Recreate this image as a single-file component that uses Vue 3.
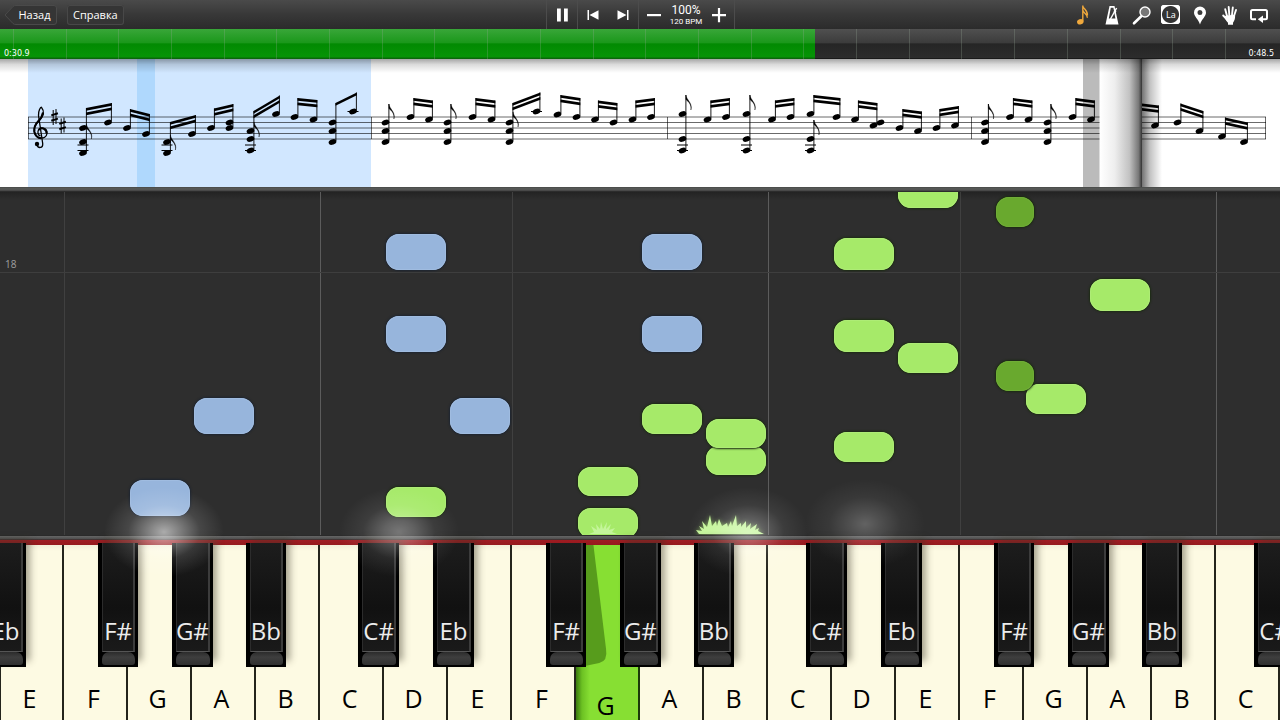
<script setup>
import { computed, ref } from "vue";

const playing = ref(true);
const tempo = ref(100);
const bpm = computed(() => Math.round(tempo.value * 1.2));

// beamed pairs: [head x, head ys, stem top] for both ends, then the beam count
const pairs = [
  { a: [83, [128, 142, 153], 108], b: [108, [122.5], 103], beams: 2 },
  { a: [127, [128], 109], b: [146, [134], 114], beams: 2 },
  { a: [167, [142, 153], 122], b: [192, [134], 115], beams: 2 },
  { a: [211, [128], 108.5], b: [229.5, [122.5, 128], 104], beams: 2 },
  { a: [250.5, [131, 139, 150.5], 111], b: [276, [114], 95.5], beams: 2 },
  { a: [294.5, [117], 98], b: [313.5, [119.5], 100], beams: 2 },
  { a: [332.5, [122.5, 131, 142], 103], b: [353, [111.5], 92.5], beams: 1 },
  { a: [410.5, [117], 98], b: [429, [119.5], 100.5], beams: 2 },
  { a: [472.5, [117], 98], b: [491.5, [119.5], 100.5], beams: 2 },
  { a: [509.5, [122.5, 131, 142], 103], b: [536.5, [111.5], 92.5], beams: 2 },
  { a: [557.5, [114.5], 95], b: [576.5, [117], 98], beams: 2 },
  { a: [595, [119.5], 100.5], b: [613.5, [122.5], 103], beams: 2 },
  { a: [632.5, [119.5], 100.5], b: [651, [117], 98], beams: 2 },
  { a: [707.5, [119.5], 100.5], b: [726, [117], 98], beams: 2 },
  { a: [772, [119.5], 100.5], b: [790.5, [117], 98], beams: 2 },
  { a: [810.5, [114], 95], b: [836.5, [117], 98], beams: 2 },
  { a: [855, [119.5], 100.5], b: [873.5, [125.5], 103], beams: 2 },
  { a: [899.5, [128], 109], b: [918, [131], 111.5], beams: 2 },
  { a: [936.5, [128], 109], b: [955, [125.5], 106], beams: 2 },
  { a: [1010, [117], 98], b: [1028.5, [119.5], 100.5], beams: 2 },
  { a: [1072.5, [117], 98], b: [1091, [119.5], 100.5], beams: 2 },
  { a: [1177.5, [122.5], 103.5], b: [1199.5, [131], 111], beams: 2 },
  { a: [1222, [136.5], 117.5], b: [1244, [142], 122.5], beams: 2 }
];

const singles = [
  [385.5, [122.5, 131, 142], 104],
  [447.5, [122.5, 131, 142], 104],
  [682.5, [114, 139, 150.5], 95],
  [746.5, [114, 139, 150.5], 95],
  [810.5, [139, 150.5], 120],
  [985, [122.5, 131, 142], 104],
  [1047.5, [122.5, 131, 142], 104]
];

const chords = [
  ...pairs.flatMap((p) => [p.a, p.b]),
  ...singles,
  [1155, [125.5], 105.5]
];

const heads = [
  ...chords.flatMap(([x, ys]) => ys.map((y) => [x, y])),
  [880.5, 122.5]
];

const stems = chords.map(([x, ys, top]) => [x + 3.4, top, Math.max(...ys) - 1]);

const beams = pairs.flatMap(({ a, b, beams: n }) => {
  const x1 = a[0] + 3;
  const x2 = b[0] + 3.8;
  return [0, 4.4].slice(0, n).map((dy) => beamPoints(x1, a[2] + dy, x2, b[2] + dy));
});
beams.push(beamPoints(1142, 103.5, 1158.8, 105.5), beamPoints(1142, 108, 1158.8, 110));

const flags = [
  ...singles.map(([x, , top]) => [x + 3.4, top]),
  [86.4, 124],
  [170.4, 135],
  [254, 122],
  [513, 112]
];

const ledgers = chords.flatMap(([x, ys]) => {
  const low = Math.max(...ys);
  const lines = [];
  if (low > 148) lines.push([x, 145], [x, 150.5]);
  if (ys[0] < 112) lines.push([x, 111.5]);
  return lines;
});

function beamPoints(x1, y1, x2, y2) {
  return `${x1},${y1} ${x2},${y2} ${x2},${y2 + 2.8} ${x1},${y1 + 2.8}`;
}

const staffLines = [117, 122.5, 128, 133.5, 139];
const barLines = [28.5, 371.5, 667.5, 971.5, 1265.5];

// falling notes: white key index, distance above the keyboard, length
const notes = [
  { key: 6, y: 265, h: 36, hand: "left" },
  { key: 10, y: 265, h: 36, hand: "left" },
  { key: 6, y: 183, h: 36, hand: "left" },
  { key: 10, y: 183, h: 36, hand: "left" },
  { key: 3, y: 101, h: 36, hand: "left" },
  { key: 7, y: 101, h: 36, hand: "left" },
  { key: 2, y: 19, h: 36, hand: "left" },
  { key: 14, y: 327, h: 30, hand: "right" },
  { key: 13, y: 265, h: 32, hand: "right" },
  { key: 17, y: 224, h: 32, hand: "right" },
  { key: 13, y: 183, h: 32, hand: "right" },
  { key: 14, y: 162, h: 30, hand: "right" },
  { key: 16, y: 121, h: 30, hand: "right" },
  { key: 13, y: 73, h: 30, hand: "right" },
  { key: 10, y: 101, h: 30, hand: "right" },
  { key: 11, y: 60, h: 29, hand: "right" },
  { key: 11, y: 87, h: 29, hand: "right" },
  { key: 9, y: 39, h: 29, hand: "right" },
  { key: 9, y: -3, h: 30, hand: "right" },
  { key: 6, y: 18, h: 30, hand: "right" },
  { key: 15.53, y: 308, h: 30, hand: "sharp" },
  { key: 15.53, y: 144, h: 30, hand: "sharp" }
];

const lanes = [
  { at: 1, strong: false },
  { at: 5, strong: true },
  { at: 8, strong: false },
  { at: 12, strong: true },
  { at: 15, strong: false },
  { at: 19, strong: true }
];

const glows = [
  { at: 12.8, size: "big" },
  { at: 31.2, size: "mid" },
  { at: 58.4, size: "mid" },
  { at: 67.6, size: "low" }
];

const names = ["C", "D", "E", "F", "G", "A", "B"];
const whiteKeys = Array.from({ length: 20 }, (_, i) => ({
  name: names[(i + 2) % 7],
  down: i === 9
}));

// left edge of every black key, in white key widths
const octave = [
  { name: "Eb", at: -0.23 },
  { name: "F#", at: 1.53 },
  { name: "G#", at: 2.69 },
  { name: "Bb", at: 3.84 },
  { name: "C#", at: 5.6 }
];
const blackKeys = [0, 7, 14].flatMap((shift) =>
  octave.map((k) => ({ name: k.name, at: k.at + shift }))
);
</script>

<template>
  <div class="player">
    <header class="toolbar">
      <nav class="menu">
        <button class="back" type="button">
          <svg class="back-shape" viewBox="0 0 53 20" preserveAspectRatio="none" aria-hidden="true">
            <path d="M1 10 L9 1.5 Q10 .5 12 .5 H50 Q52.5 .5 52.5 3 V17 Q52.5 19.5 50 19.5 H12 Q10 19.5 9 18.5 Z" />
          </svg>
          <span>Назад</span>
        </button>
        <button class="help" type="button">Справка</button>
      </nav>

      <div class="transport">
        <div class="group">
          <button class="icon" type="button" aria-label="Пауза" @click="playing = !playing">
            <svg width="16" height="16" viewBox="0 0 16 16"><path d="M3 1.500h3.800v13H3zM10 1.500h3.800v13H10z" /></svg>
          </button>
        </div>
        <div class="group">
          <button class="icon" type="button" aria-label="В начало">
            <svg width="16" height="16" viewBox="0 0 16 16"><path d="M2.500 3h1.500v10H2.500zM13.500 3.200v9.600L4.500 8z" /></svg>
          </button>
          <button class="icon" type="button" aria-label="Вперёд">
            <svg width="16" height="16" viewBox="0 0 16 16"><path d="M12 3h1.500v10H12zM2.500 3.200v9.600L11.500 8z" /></svg>
          </button>
        </div>
        <div class="group last">
          <button class="icon" type="button" aria-label="Медленнее" @click="tempo -= 5">
            <svg width="16" height="16" viewBox="0 0 16 16"><path d="M1 7h14v2.200H1z" /></svg>
          </button>
          <div class="tempo">
            <span class="percent">{{ tempo }}%</span>
            <span class="bpm">{{ bpm }} BPM</span>
          </div>
          <button class="icon" type="button" aria-label="Быстрее" @click="tempo += 5">
            <svg width="16" height="16" viewBox="0 0 16 16"><path d="M1 7h5.900V1h2.200v6H15v2.200H9.100v6H6.900v-6H1z" /></svg>
          </button>
        </div>
      </div>

      <div class="tools">
        <button type="button" aria-label="Ноты">
          <svg width="20" height="22" viewBox="0 0 20 22">
            <ellipse cx="7.300" cy="17.800" rx="3.300" ry="2.600" transform="rotate(-20 7.300 17.800)" fill="#efa83c" />
            <path d="M9.800 17.500V1.500M9.800 2c.5 3 5.200 4 4.600 9.500M9.800 6.200c.5 3 4.600 3.500 4.600 7.500" fill="none" stroke="#efa83c" stroke-width="1.400" />
          </svg>
        </button>
        <button type="button" aria-label="Метроном">
          <svg width="20" height="22" viewBox="0 0 20 22">
            <path fill-rule="evenodd" d="M7.500 2h5L16.500 20.500h-13zM8.800 3.800 6.800 14.500h6.600L11.400 3.800z" fill="#fff" />
            <path d="M8.500 15 14.600 4" stroke="#fff" stroke-width="1.500" />
            <circle cx="13" cy="7.500" r="1.200" fill="#fff" />
          </svg>
        </button>
        <button type="button" aria-label="Масштаб">
          <svg width="20" height="22" viewBox="0 0 20 22">
            <path d="M9 12.500 2 19.300" stroke="#fff" stroke-width="2.600" stroke-linecap="round" />
            <circle cx="13" cy="8" r="5" fill="#777" stroke="#fff" stroke-width="1.400" />
          </svg>
        </button>
        <button class="la" type="button" aria-label="Названия нот"><span>La</span></button>
        <button type="button" aria-label="Метка">
          <svg width="20" height="22" viewBox="0 0 20 22">
            <path fill-rule="evenodd" d="M10 2.500a6 6 0 0 1 6 6c0 4-4.200 6.500-6 12-1.800-5.500-6-8-6-12a6 6 0 0 1 6-6zm0 3.600a2.500 2.500 0 1 0 0 5 2.500 2.500 0 0 0 0-5z" fill="#fff" />
          </svg>
        </button>
        <button type="button" aria-label="Руки">
          <svg width="20" height="22" viewBox="0 0 20 22">
            <path d="M7 12 5.200 5.200M9.300 11 8.700 3M12 11l.8-7.500M14 12l2-6M7 15.500 3.200 11.500" stroke="#fff" stroke-width="1.900" stroke-linecap="round" />
            <path d="M6 11.500 15 10.800c.5 3-.5 6-2 8v2H8v-2c-1.500-1.500-3-4-3.600-6z" fill="#fff" />
          </svg>
        </button>
        <button type="button" aria-label="Повтор">
          <svg width="20" height="22" viewBox="0 0 20 22">
            <path d="M7 15.300H3.500Q2 15.300 2 13.800V7.500Q2 6 3.500 6h13Q18 6 18 7.500v6.300q0 1.500-1.500 1.500H13" fill="none" stroke="#fff" stroke-width="2" />
            <path d="M14 11.500v7.600L8.800 15.300z" fill="#fff" />
          </svg>
        </button>
      </div>
    </header>

    <section class="timeline">
      <div class="elapsed"></div>
      <div class="ticks"><i v-for="n in 24" :key="n"></i></div>
      <div class="times">
        <span>0:30.9</span>
        <span>0:48.5</span>
      </div>
    </section>

    <svg class="sheet" viewBox="0 59 1280 128" aria-label="Нотный стан">
      <defs>
        <linearGradient id="fold">
          <stop offset="0" stop-color="#fff" />
          <stop offset=".35" stop-color="#eee" />
          <stop offset=".7" stop-color="#c2c2c2" />
          <stop offset=".92" stop-color="#777" />
          <stop offset="1" stop-color="#333" />
        </linearGradient>
        <linearGradient id="cast">
          <stop offset="0" stop-color="#000" stop-opacity=".55" />
          <stop offset=".4" stop-color="#000" stop-opacity=".24" />
          <stop offset="1" stop-color="#000" stop-opacity="0" />
        </linearGradient>
        <linearGradient id="top" x2="0" y2="1">
          <stop offset="0" stop-color="#000" stop-opacity=".35" />
          <stop offset=".4" stop-color="#000" stop-opacity=".14" />
          <stop offset="1" stop-color="#000" stop-opacity="0" />
        </linearGradient>
      </defs>
      <rect y="59" width="1280" height="128" fill="#fff" />
      <rect x="28" y="59" width="343" height="128" fill="#d1e7ff" />
      <rect x="137" y="59" width="18" height="128" fill="#afd8fd" />
      <rect x="1083" y="59" width="16.500" height="128" fill="#bbb" />

      <g stroke="#000" stroke-opacity=".65" stroke-width=".9">
        <path v-for="y in staffLines" :key="y" :d="`M28 ${y}H1099.500M1142 ${y}H1266`" />
        <path v-for="x in barLines" :key="x" :d="`M${x} 117V139`" />
      </g>

      <g fill="none" stroke="#000">
        <path d="M37 145C38 148.500 43.200 148.500 42.700 143.500L38.500 115.500C38.200 110.500 40.500 107 41.500 107.300C44.500 111 43.500 116 39.300 120.500C35.500 124 33.800 127 34 131C35 139.500 46 140.500 47 133.500C47.300 127 39 126.300 38 131.500C37.700 134 39 135.500 40.500 136" stroke-width="1.300" />
        <path d="M43 112.500C42.500 116 40.500 119 38 121.500C35 124.500 33.900 128 34.500 132C35.500 136 38 138 41 138.200" stroke-width="2" />
        <path d="M46.500 133.500C47 129 41.500 126.500 39 130" stroke-width="2" />
        <g v-for="[x, y] in [[54.5, 117], [62.5, 125.5]]" :key="x">
          <path :d="`M${x - 1.300} ${y - 7}v15M${x + 1.500} ${y - 8}v15`" stroke-width="1" />
          <path :d="`M${x - 3.200} ${y - 1.600}l6.600 -2.200M${x - 3.200} ${y + 3.800}l6.600 -2.200`" stroke-width="2" />
        </g>
      </g>
      <circle cx="37" cy="144" r="2.200" />

      <path v-for="([x, y1, y2], i) in stems" :key="'s' + i" :d="`M${x} ${y1}V${y2}`" stroke="#000" stroke-width=".9" />
      <ellipse
        v-for="([x, y], i) in heads"
        :key="'h' + i"
        :cx="x"
        :cy="y"
        rx="4"
        ry="2.600"
        :transform="`rotate(-20 ${x} ${y})`"
      />
      <polygon v-for="(points, i) in beams" :key="'b' + i" :points="points" />
      <path
        v-for="([x, y], i) in flags"
        :key="'f' + i"
        :d="`M${x} ${y}c.5 5 7 8 5 15c.8 -5 -2 -8 -5 -10.500z`"
        stroke="#000"
        stroke-width=".4"
      />
      <path v-for="([x, y], i) in ledgers" :key="'l' + i" :d="`M${x - 5.500} ${y}h11`" stroke="#000" />

      <rect x="1100" y="59" width="42" height="128" fill="url(#fold)" />
      <rect x="1142" y="59" width="20" height="128" fill="url(#cast)" />
      <rect y="59" width="1280" height="14" fill="url(#top)" />
    </svg>

    <div class="divider"></div>

    <main class="roll">
      <i
        v-for="lane in lanes"
        :key="lane.at"
        class="lane"
        :class="{ strong: lane.strong }"
        :style="{ left: lane.at * 5 + '%' }"
      ></i>
      <div class="measure"><span>18</span></div>
      <div
        v-for="(note, i) in notes"
        :key="i"
        class="note"
        :class="note.hand"
        :style="{ left: note.key * 5 + '%', bottom: note.y + 'px', height: note.h + 'px' }"
      ></div>
      <svg class="burst small" viewBox="0 0 28 12" preserveAspectRatio="none">
        <path d="M0 12 5 10 2 4 8 8 7 2 11 7 12 0 14 7 18 0 17 7 22 2 20 8 26 6 23 10 28 12z" />
      </svg>
      <svg class="burst wide" viewBox="0 0 68 19" preserveAspectRatio="none">
        <path d="M3 19 0 15 6 16 3 11 8 14 6 6 11 12 14 0 16 11 20 6 21 11 23 4 26 11 31 8 32 12 35 6 36 11 40 0 41 11 45 8 45 12 50 6 50 13 55 8 54 14 61 9 59 15 63 13 62 16 68 19z" />
      </svg>
    </main>

    <section class="keyboard">
      <div class="felt"></div>
      <div class="keys">
        <button v-for="(key, i) in whiteKeys" :key="i" type="button" class="white" :class="{ down: key.down }">
          <svg v-if="key.down" class="slant" viewBox="0 0 64 124" preserveAspectRatio="none" aria-hidden="true">
            <path d="M9 0H18L31 104Q33 116 24 118L9 121z" />
          </svg>
          <span>{{ key.name }}</span>
        </button>
        <button
          v-for="key in blackKeys"
          :key="key.at"
          type="button"
          class="black"
          :class="{ flat: key.at > 8 && key.at < 9 }"
          :style="{ left: key.at * 5 + '%' }"
        >
          <span class="face">{{ key.name }}</span>
          <span class="lip"></span>
        </button>
      </div>
      <i
        v-for="glow in glows"
        :key="glow.at"
        class="glow"
        :class="glow.size"
        :style="{ left: glow.at + '%' }"
      ></i>
    </section>
  </div>
</template>

<style>
body {
  margin: 0;
  background: #2e2e2e;
}
</style>

<style scoped>
.player {
  min-height: 100vh;
  display: flex;
  flex-direction: column;
  overflow: hidden;
  font-family: "Open Sans", "Noto Sans", sans-serif;
  color: #fff;
}

button {
  border: none;
  background: none;
  color: inherit;
  font-family: inherit;
  padding: 0;
  cursor: pointer;
}

.toolbar {
  height: 29px;
  display: grid;
  grid-template-columns: 1fr auto 1fr;
  align-items: center;
  background: linear-gradient(#4a4a4a, #383838 50%, #2b2b2b);
}

.menu {
  display: flex;
  gap: 10px;
  padding-left: 4px;
}

.menu button {
  height: 20px;
  font-size: 11px;
  line-height: 18px;
}

.back {
  position: relative;
  width: 53px;
  padding-left: 8px;
}

.back-shape {
  position: absolute;
  inset: 0;
  width: 100%;
  height: 100%;
  fill: #353535;
  stroke: #4a4a4a;
}

.back span {
  position: relative;
}

.help {
  padding: 0 6px;
  border-radius: 3px;
  background: #353535;
  box-shadow: inset 0 0 0 1px #484848;
}

.transport {
  display: flex;
}

.group {
  display: flex;
  align-items: center;
  height: 29px;
  border-left: 1px solid #4c4c4c;
}

.group.last {
  border-right: 1px solid #4c4c4c;
}

.icon {
  width: 30px;
  height: 28px;
  display: grid;
  place-items: center;
}

.icon svg {
  fill: #fff;
}

.tempo {
  width: 35px;
  display: flex;
  flex-direction: column;
  align-items: center;
  white-space: nowrap;
  font-family: Roboto, sans-serif;
}

.percent {
  font-size: 12px;
  line-height: 14px;
}

.bpm {
  font-size: 8px;
  line-height: 9px;
}

.tools {
  justify-self: end;
  width: 206px;
  padding-right: 6px;
  display: flex;
}

.tools button {
  flex: 1;
  height: 28px;
  display: grid;
  place-items: center;
}

.la span {
  width: 17px;
  height: 17px;
  border: 1px solid #fff;
  border-radius: 2px;
  background: radial-gradient(circle, #333 8px, #fff 9px);
  font-size: 9px;
  line-height: 17px;
}

.timeline {
  position: relative;
  height: 30px;
  background: linear-gradient(#505050, #3c3c3c 45%, #252525 50%, #2c2c2c 95%, #111);
}

.elapsed {
  width: 63.7%;
  height: 30px;
  background: linear-gradient(#39a639, #1b981b 45%, #028a02 50%, #069406 92%, #0a5c0a);
}

.ticks {
  position: absolute;
  inset: 0;
  display: flex;
  padding-left: 1%;
}

.ticks i {
  flex: 0 0 4.16%;
  box-sizing: border-box;
  border-left: 1px solid rgba(150, 170, 150, 0.28);
}

.times {
  position: absolute;
  inset: auto 6px 0 4px;
  display: flex;
  justify-content: space-between;
  font-family: "DejaVu Sans", sans-serif;
  font-size: 8px;
  line-height: 11px;
}

.sheet {
  display: block;
  width: 100%;
}

.divider {
  height: 5px;
  background: linear-gradient(#474947, #5a5c5a 40%, #484848 70%, #1e1e1e);
}

.roll {
  position: relative;
  flex: 1;
  min-height: 343px;
  overflow: hidden;
  background: linear-gradient(#232323, #2e2e2e 8px);
}

.lane {
  position: absolute;
  top: 0;
  bottom: 0;
  width: 1px;
  background: #404040;
}

.lane.strong {
  background: #5c5c5c;
}

.measure {
  position: absolute;
  bottom: 262px;
  left: 0;
  right: 0;
  padding-left: 5px;
  border-bottom: 1px solid #3e3e3e;
  color: #a0a0a0;
  font-size: 10px;
  line-height: 15px;
}

.note {
  position: absolute;
  width: calc(5% - 4px);
  margin-left: 2px;
  box-sizing: border-box;
  border-radius: 13px;
}

.note.left {
  background: #97b5dc;
  box-shadow: inset 0 0 0 1px #a0bce0, 0 0 2px 1px #1d2531;
}

.note.right {
  background: #a6ea69;
  box-shadow: inset 0 0 0 1px #aeec76, 0 0 2px 1px #1c2c12;
}

.note.sharp {
  width: 3%;
  background: #69a92e;
  box-shadow: inset 0 0 0 1px #70ad37, 0 0 2px 1px #1a2a10;
}

.burst {
  position: absolute;
  bottom: 1px;
  fill: #c4f59a;
}

.burst.small {
  left: 46%;
  width: 28px;
  height: 12px;
}

.burst.wide {
  left: 54.4%;
  width: 68px;
  height: 19px;
  filter: drop-shadow(0 0 2px #7fae55);
}

.keyboard {
  position: relative;
}

.felt {
  height: 10px;
  background: linear-gradient(#2a2a2a 1px, #666 1px, #4d4d4d 4px, #3a1a1a 5px, #a01c22 5px, #95191e);
}

.keys {
  position: relative;
  display: flex;
  height: 175px;
}

.white {
  position: relative;
  flex: 1;
  padding: 0 3px 7px 0;
  border-right: 2px solid #24241c;
  background: linear-gradient(#f2eed8, #fdfae3 6px);
  color: #000;
  font-size: 25px;
  line-height: 30px;
  display: flex;
  align-items: flex-end;
  justify-content: center;
}

.keys .white:first-child {
  box-shadow: inset 1px 0 #24241c;
}

.white.down {
  padding-bottom: 0;
  background: linear-gradient(to right, #3b7a10, #6cc123 6px, #87df33 14px);
  border-right-color: #1c3a0a;
}

.white.down span {
  position: relative;
}

.slant {
  position: absolute;
  top: 0;
  left: 0;
  width: 100%;
  height: 124px;
  fill: #579c1c;
}

.black {
  position: absolute;
  top: -2px;
  width: calc(3% + 2px);
  height: 124px;
  box-sizing: border-box;
  padding: 0 3px 2px 4px;
  background: #000;
  box-shadow: 5px -5px 7px -1px rgba(60, 55, 40, 0.45);
  display: flex;
  flex-direction: column;
}

.black.flat {
  box-shadow: none;
}

.face {
  flex: 1;
  display: flex;
  align-items: flex-end;
  justify-content: center;
  box-sizing: border-box;
  padding-bottom: 5px;
  border-left: 1px solid #2c2c2c;
  border-right: 2px solid #3c3c3c;
  border-bottom: 1px solid #555;
  background: linear-gradient(#1d1d1d, #111 60%, #1a1a1a);
  color: #ececec;
  font-size: 24px;
  line-height: 30px;
}

.lip {
  height: 13px;
  border-radius: 7px 7px 3px 3px;
  background: linear-gradient(#2c2c2c, #3e3e3e 40%, #303030);
}

.glow {
  position: absolute;
  top: -48px;
  width: 120px;
  height: 90px;
  margin-left: -60px;
  pointer-events: none;
}

.glow.big {
  background: radial-gradient(closest-side, rgba(255, 255, 255, 0.6), rgba(255, 255, 255, 0.4) 25%, rgba(255, 255, 255, 0.12) 60%, transparent);
}

.glow.mid {
  background: radial-gradient(closest-side, rgba(255, 255, 255, 0.35), rgba(255, 255, 255, 0.25) 25%, rgba(255, 255, 255, 0.07) 60%, transparent);
}

.glow.low {
  top: -56px;
  background: radial-gradient(closest-side, rgba(255, 255, 255, 0.25), rgba(255, 255, 255, 0.16) 25%, rgba(255, 255, 255, 0.05) 60%, transparent);
}
</style>
